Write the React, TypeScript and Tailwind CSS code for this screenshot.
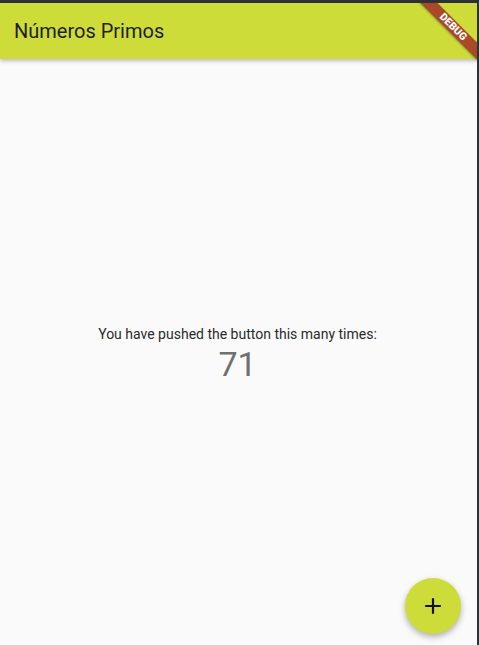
import { Plus } from "lucide-react";

export default function App() {
  return (
    <div className="h-[645px] w-[479px] bg-[#2f3033] pt-[3px] pr-[2px] font-['Roboto',sans-serif]">
      <div className="relative flex h-full flex-col overflow-hidden bg-[#fafafa]">
        {/* app bar */}
        <header className="relative z-10 flex h-[56px] items-center bg-[#cddc39] px-[14px] shadow-[0_2px_4px_rgba(0,0,0,0.25)]">
          <h1 className="text-[20px] text-[#1f1f1f]">Números Primos</h1>
        </header>

        {/* body */}
        <main className="flex flex-1 flex-col items-center justify-center pt-[4px] pr-[2px]">
          <p className="text-[14px] leading-[20px] text-[#2a2a2a]">
            You have pushed the button this many times:
          </p>
          <p className="text-[34px] leading-[40px] text-[#707070]">71</p>
        </main>

        {/* fab */}
        <button className="absolute bottom-[11px] right-[16px] z-10 flex h-[56px] w-[56px] items-center justify-center rounded-full bg-[#cddc39] shadow-[0_3px_6px_rgba(0,0,0,0.3)]">
          <Plus size={24} strokeWidth={2.2} className="text-[#111]" />
        </button>

        {/* debug banner */}
        <div className="absolute left-[411px] top-[18px] z-20 flex h-[12px] w-[84px] rotate-45 items-center justify-center bg-[#a84a2a] shadow-[0_1px_2px_rgba(0,0,0,0.3)]">
          <span className="text-[10.5px] font-black leading-none text-white">DEBUG</span>
        </div>
      </div>
    </div>
  );
}
